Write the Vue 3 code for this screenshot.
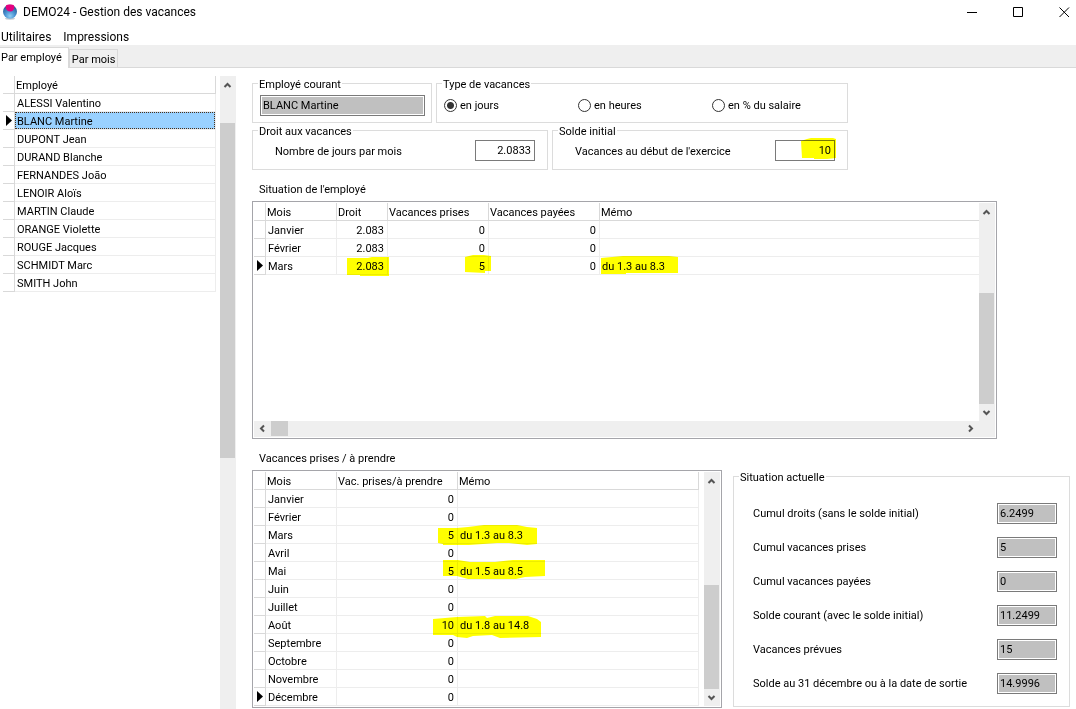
<script setup>
import { ref } from 'vue'

const tab = ref('employe')
const kind = ref('jours')

const employees = [
  'ALESSI Valentino', 'BLANC Martine', 'DUPONT Jean', 'DURAND Blanche',
  'FERNANDES João', 'LENOIR Aloïs', 'MARTIN Claude', 'ORANGE Violette',
  'ROUGE Jacques', 'SCHMIDT Marc', 'SMITH John',
]
const selected = ref('BLANC Martine')

const kinds = [
  { id: 'jours', label: 'en jours' },
  { id: 'heures', label: 'en heures' },
  { id: 'salaire', label: 'en % du salaire' },
]

const situation = [
  { month: 'Janvier', due: '2.083', taken: '0', paid: '0', memo: '' },
  { month: 'Février', due: '2.083', taken: '0', paid: '0', memo: '' },
  {
    month: 'Mars', due: '2.083', taken: '5', paid: '0', memo: 'du 1.3 au 8.3', current: true,
    dueMark: 'M10 1L31 1 35 0 52 0 52 19 23 19 23 18 10 18Z',
    takenMark: 'M77 0L85 -2 96 -2 103 -1 103 14 97 14 97 16 77 15Z',
    memoMark: 'M1 1L12 0 23 -1 69 -1 78 0 78 16 26 16 26 17 1 17Z',
  },
]

const planned = [
  { month: 'Janvier', days: '0', memo: '' },
  { month: 'Février', days: '0', memo: '' },
  {
    month: 'Mars', days: '5', memo: 'du 1.3 au 8.3',
    mark: 'M101 2L120 2 131 1 139 0 147 -1 180 -1 190 1 200 2 200 18 190 19 172 17 160 17 132 19 106 19 106 18 101 17Z',
  },
  { month: 'Avril', days: '0', memo: '' },
  {
    month: 'Mai', days: '5', memo: 'du 1.5 au 8.5',
    mark: 'M106 -2L121 -2 133 0 158 0 176 -2 208 -2 208 14 188 15 179 17 131 17 120 14 106 14Z',
  },
  { month: 'Juin', days: '0', memo: '' },
  { month: 'Juillet', days: '0', memo: '' },
  {
    month: 'Août', days: '10', memo: 'du 1.8 au 14.8',
    mark: 'M96 3L120 1 148 0 150 2 158 0 191 0 200 3 204 6 204 21 163 22 155 19 136 20 130 22 120 21 116 19 96 19Z',
  },
  { month: 'Septembre', days: '0', memo: '' },
  { month: 'Octobre', days: '0', memo: '' },
  { month: 'Novembre', days: '0', memo: '' },
  { month: 'Décembre', days: '0', memo: '', current: true },
]

const totals = [
  { id: 'droits', label: 'Cumul droits (sans le solde initial)', value: '6.2499' },
  { id: 'prises', label: 'Cumul vacances prises', value: '5' },
  { id: 'payees', label: 'Cumul vacances payées', value: '0' },
  { id: 'courant', label: 'Solde courant (avec le solde initial)', value: '11.2499' },
  { id: 'prevues', label: 'Vacances prévues', value: '15' },
  { id: 'final', label: 'Solde au 31 décembre ou à la date de sortie', value: '14.9996' },
]
</script>

<template>
  <div class="window">
    <header class="titlebar">
      <svg class="logo" viewBox="0 0 16 16" aria-hidden="true">
        <defs>
          <radialGradient id="ball" cx="50%" cy="80%" r="70%">
            <stop offset="0" stop-color="#8fd0f5" />
            <stop offset="0.5" stop-color="#4a93d2" />
            <stop offset="1" stop-color="#2a5c98" />
          </radialGradient>
        </defs>
        <ellipse cx="8" cy="14.6" rx="5" ry="1.2" fill="#c4cbd2" />
        <circle cx="8" cy="7.8" r="7" fill="url(#ball)" />
        <path d="M4 1.6C5 .2 11 .2 12 1.6L12.4 4C11.8 6 10.5 7.4 8.2 7.4S4.2 6 3.7 4Z" fill="#e4007f" />
      </svg>
      <h1>DEMO24 - Gestion des vacances</h1>
      <div class="window-buttons">
        <button aria-label="Réduire"><svg viewBox="0 0 11 11"><path d="M0 5.5H10" /></svg></button>
        <button aria-label="Agrandir"><svg viewBox="0 0 11 11"><path d="M.5 .5H9.5V9.5H.5Z" /></svg></button>
        <button aria-label="Fermer"><svg viewBox="0 0 11 11"><path d="M.5 .5L10 10M10 .5L.5 10" /></svg></button>
      </div>
    </header>

    <nav class="menu">
      <button>Utilitaires</button>
      <button>Impressions</button>
    </nav>

    <div class="tabs" role="tablist">
      <button role="tab" :class="{ active: tab === 'employe' }" :aria-selected="tab === 'employe'" @click="tab = 'employe'">Par employé</button>
      <button role="tab" :class="{ active: tab === 'mois' }" :aria-selected="tab === 'mois'" @click="tab = 'mois'">Par mois</button>
    </div>

    <div class="body">
      <aside class="employees">
        <table>
          <colgroup><col class="c-ind"><col></colgroup>
          <thead><tr><th></th><th>Employé</th></tr></thead>
          <tbody>
            <tr v-for="name in employees" :key="name" :class="{ selected: name === selected }" @click="selected = name">
              <td class="ind"><svg v-if="name === selected" class="cursor" viewBox="0 0 6 11"><path d="M0 0L6 5.5 0 11Z" /></svg></td>
              <td>{{ name }}</td>
            </tr>
          </tbody>
        </table>
        <div class="vbar">
          <button aria-label="Monter"><svg viewBox="0 0 16 17"><path d="M4.5 11L7.5 8 10.5 11" /></svg></button>
          <i :style="{ flexGrow: 30 }"></i><b :style="{ flexGrow: 335 }"></b><i :style="{ flexGrow: 251 }"></i>
        </div>
      </aside>

      <main>
        <form class="settings" @submit.prevent>
          <div class="pair uneven">
            <fieldset class="current">
              <legend>Employé courant</legend>
              <input class="locked" type="text" aria-label="Employé courant" :value="selected" readonly>
            </fieldset>
            <fieldset class="kinds">
              <legend>Type de vacances</legend>
              <label v-for="k in kinds" :key="k.id"><input v-model="kind" type="radio" name="kind" :value="k.id">{{ k.label }}</label>
            </fieldset>
          </div>
          <div class="pair">
            <fieldset class="amount">
              <legend>Droit aux vacances</legend>
              <label for="rate">Nombre de jours par mois</label>
              <span class="field"><input id="rate" type="text" value="2.0833"></span>
            </fieldset>
            <fieldset class="amount">
              <legend>Solde initial</legend>
              <label for="opening">Vacances au début de l'exercice</label>
              <span class="field">
                <input id="opening" type="text" value="10">
                <svg class="mark"><path d="M26 1L32 -1 36 -2 58 -2 61 -1 61 18 52 19 39 19 39 18 27 18Z" /></svg>
              </span>
            </fieldset>
          </div>
        </form>

        <h2>Situation de l'employé</h2>
        <section class="pane overview">
          <div class="scroll-area">
            <table>
              <colgroup><col class="c-ind"><col class="c-month"><col class="c-due"><col class="c-taken"><col class="c-paid"><col></colgroup>
              <thead><tr><th></th><th>Mois</th><th>Droit</th><th>Vacances prises</th><th>Vacances payées</th><th>Mémo</th></tr></thead>
              <tbody>
                <tr v-for="r in situation" :key="r.month">
                  <td class="ind"><svg v-if="r.current" class="cursor" viewBox="0 0 6 11"><path d="M0 0L6 5.5 0 11Z" /></svg></td>
                  <td>{{ r.month }}</td>
                  <td class="num">{{ r.due }}<svg v-if="r.dueMark" class="mark"><path :d="r.dueMark" /></svg></td>
                  <td class="num">{{ r.taken }}<svg v-if="r.takenMark" class="mark"><path :d="r.takenMark" /></svg></td>
                  <td class="num">{{ r.paid }}</td>
                  <td>{{ r.memo }}<svg v-if="r.memoMark" class="mark"><path :d="r.memoMark" /></svg></td>
                </tr>
              </tbody>
            </table>
          </div>
          <div class="vbar">
            <button aria-label="Monter"><svg viewBox="0 0 16 17"><path d="M4.5 11L7.5 8 10.5 11" /></svg></button>
            <i :style="{ flexGrow: 73 }"></i><b :style="{ flexGrow: 110 }"></b>
            <button aria-label="Descendre"><svg viewBox="0 0 16 17"><path d="M4.5 7L7.5 10 10.5 7" /></svg></button>
          </div>
          <div class="hbar">
            <button aria-label="Gauche"><svg viewBox="0 0 17 16"><path d="M10 4.5L7 7.5 10 10.5" /></svg></button>
            <b></b><i></i>
            <button aria-label="Droite"><svg viewBox="0 0 17 16"><path d="M7 4.5L10 7.5 7 10.5" /></svg></button>
          </div>
          <div class="corner"></div>
        </section>

        <div class="lower">
          <div class="plan">
            <h2>Vacances prises / à prendre</h2>
            <section class="pane">
              <div class="scroll-area inset">
                <table>
                  <colgroup><col class="c-ind"><col class="c-month"><col class="c-plan"><col></colgroup>
                  <thead><tr><th></th><th>Mois</th><th>Vac. prises/à prendre</th><th>Mémo</th></tr></thead>
                  <tbody>
                    <tr v-for="r in planned" :key="r.month">
                      <td class="ind"><svg v-if="r.current" class="cursor" viewBox="0 0 6 11"><path d="M0 0L6 5.5 0 11Z" /></svg></td>
                      <td>{{ r.month }}</td>
                      <td class="num">{{ r.days }}<svg v-if="r.mark" class="mark"><path :d="r.mark" /></svg></td>
                      <td>{{ r.memo }}</td>
                    </tr>
                  </tbody>
                </table>
              </div>
              <div class="vbar">
                <button aria-label="Monter"><svg viewBox="0 0 16 17"><path d="M4.5 11L7.5 8 10.5 11" /></svg></button>
                <i :style="{ flexGrow: 96 }"></i><b :style="{ flexGrow: 104 }"></b>
                <button aria-label="Descendre"><svg viewBox="0 0 16 17"><path d="M4.5 7L7.5 10 10.5 7" /></svg></button>
              </div>
            </section>
          </div>
          <fieldset class="totals">
            <legend>Situation actuelle</legend>
            <div v-for="t in totals" :key="t.id" class="total">
              <label :for="t.id">{{ t.label }}</label>
              <input :id="t.id" class="locked" type="text" :value="t.value" readonly>
            </div>
          </fieldset>
        </div>
      </main>
    </div>
  </div>
</template>

<style>
body { background: #fff; }
</style>

<style scoped>
.window, .window * { box-sizing: border-box; }
.window {
  display: flex;
  flex-direction: column;
  min-height: 100vh;
  background: #fff;
  color: #000;
  font: 11px/13px Roboto, "Noto Sans", sans-serif;
}
button { padding: 0; border: 0; background: none; color: inherit; font: inherit; }
input { margin: 0; border-radius: 0; color: inherit; font: inherit; }
h1, h2 { margin: 0; font: inherit; }

.titlebar { display: flex; align-items: center; height: 24px; padding: 0 6px 0 2px; font-size: 12px; line-height: 16px; }
.logo { width: 16px; height: 16px; margin-right: 5px; }
.window-buttons { display: flex; gap: 35px; margin-left: auto; }
.window-buttons button { width: 11px; height: 11px; }
.window-buttons svg { display: block; width: 11px; height: 11px; fill: none; stroke: #000; }

.menu { display: flex; gap: 12px; padding: 5px 1px 0; font-size: 12px; line-height: 16px; }

.tabs { display: flex; align-items: flex-end; height: 23px; background: #efefef; box-shadow: inset 0 -1px #d9d9d9; }
.tabs button { height: 19px; padding: 1px 2px 0; border: 1px solid #d9d9d9; background: #efefef; }
.tabs .active { height: 21px; padding: 0 6px 1px 1px; border-left: 0; border-bottom: 0; background: #fff; }

.body { display: flex; flex: 1; }
.employees { display: flex; flex: 0 0 236px; align-items: stretch; gap: 4px; padding: 8px 0 0 3px; }
.employees table { flex: 1; align-self: flex-start; }

table { width: 100%; border-spacing: 0; table-layout: fixed; }
th, td {
  position: relative;
  height: 18px;
  padding: 2px 2px 0;
  border: solid #ededed;
  border-width: 0 1px 1px 0;
  text-align: left;
  font-weight: normal;
  white-space: nowrap;
}
th { padding: 2px 1px 0; border-color: #d9d9d9; }
.ind { padding: 0 0 0 3px; border-color: #d9d9d9; }
.num { text-align: right; padding-right: 3px; }
.cursor { display: block; width: 6px; height: 11px; }
.c-ind { width: 12px; }
.c-month { width: 71px; }
.c-due { width: 51px; }
.c-taken { width: 101px; }
.c-paid { width: 111px; }
.c-plan { width: 121px; }
.selected td:last-child { background: #99d1ff; background-clip: padding-box; }
.selected td:last-child::after { content: ""; position: absolute; inset: 0; border: 1px dotted #4a3018; }

.mark { position: absolute; top: 0; left: 0; z-index: 1; width: 1px; height: 1px; overflow: visible; mix-blend-mode: multiply; pointer-events: none; }
.mark path { fill: #ff0; }

.vbar { display: flex; flex-direction: column; width: 16px; background: #efefef; }
.vbar button { height: 17px; }
.vbar svg, .hbar svg { display: block; fill: none; stroke: #555; stroke-width: 2; }
.vbar svg { width: 16px; height: 17px; }
.vbar i, .vbar b { flex-basis: 0; }
.vbar b { margin-right: 1px; background: #cdcdcd; }
.hbar { display: flex; height: 16px; background: #efefef; }
.hbar svg { width: 17px; height: 16px; }
.hbar b { width: 17px; height: 15px; background: #cdcdcd; }
.hbar i { flex: 1; }
.corner { background: #efefef; }

main { display: flex; flex: 1; flex-direction: column; min-width: 0; padding: 8px 6px 1px 16px; }
h2 { margin: 13px 0 5px 7px; }

.settings { display: grid; margin-right: 222px; }
.pair { display: grid; grid-template-columns: 1fr 1fr; gap: 4px; }
.uneven { grid-template-columns: 180fr 412fr; }
fieldset { --indent: 7px; min-width: 0; margin: 0; padding: 0 0 0 var(--indent); border: 1px solid #dcdcdc; }
legend { margin-left: calc(5px - var(--indent)); padding: 2px 1px 0; }
.settings fieldset { height: 47px; }
.current { padding-top: 4px; padding-right: 6px; }
.current input { display: block; width: 100%; }
.locked { height: 21px; padding: 0 2px; border: 1px solid #7a7a7a; background: #c0c0c0; box-shadow: inset 0 0 0 1px #fff; }
.kinds { display: grid; grid-template-columns: repeat(3, 134px); align-items: center; padding-bottom: 2px; }
.kinds label { display: flex; align-items: center; gap: 3px; }
.kinds input { appearance: none; width: 13px; height: 13px; border: 1px solid #333; border-radius: 50%; background: #fff; }
.kinds input:checked { background: radial-gradient(circle, #333 3px, #fff 4px); }
.amount { --indent: 22px; padding-top: 2px; padding-right: 12px; }
.amount label { float: left; line-height: 24px; }
.field { position: relative; float: right; width: 60px; height: 21px; }
.field input { display: block; width: 60px; height: 21px; padding: 0 3px; border: 1px solid #7a7a7a; background: #fff; text-align: right; }

.pane { display: grid; grid-template-columns: 1fr 16px; padding: 1px; border: 1px solid #a5a5aa; }
.overview { flex: 1; grid-template-rows: 1fr 16px; min-height: 160px; margin-right: 73px; }
.overview th:last-child, .overview td:last-child { border-right: 0; }
.inset { padding-right: 5px; }
.lower { display: flex; align-items: flex-end; gap: 11px; }
.plan { flex: 1; min-width: 0; }
.totals { --indent: 19px; width: 337px; margin-bottom: 1px; padding-top: 19px; padding-right: 12px; padding-bottom: 12px; }
.total { display: flex; align-items: center; justify-content: space-between; }
.total + .total { margin-top: 13px; }
.total input { width: 60px; }
</style>
